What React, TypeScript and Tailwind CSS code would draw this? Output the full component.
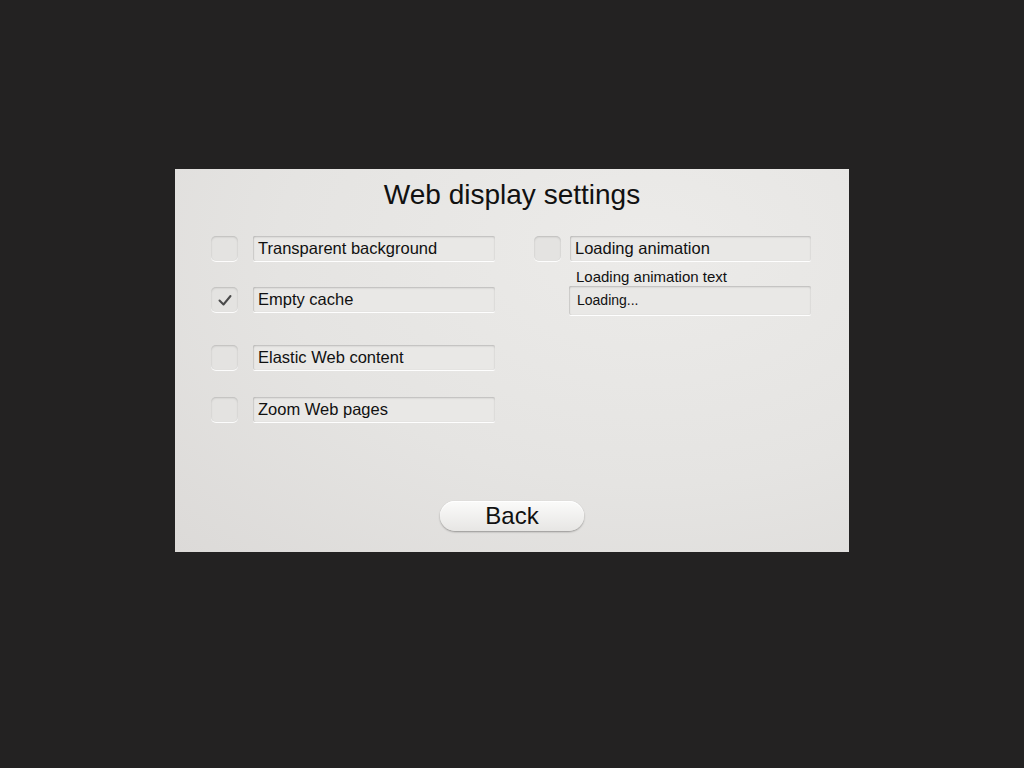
import React, { useState } from 'react';

const font = { fontFamily: '"Liberation Sans", Arial, sans-serif' };

function Check({ checked, onClick }: { checked: boolean; onClick: () => void }) {
  return (
    <button
      onClick={onClick}
      className="flex h-[25px] w-[27px] shrink-0 items-center justify-center rounded-[5px] bg-[#e4e3e1] shadow-[inset_0_1px_2px_rgba(0,0,0,0.18),0_1px_0_rgba(255,255,255,0.9)]"
    >
      {checked && (
        <svg width="16" height="14" viewBox="0 0 16 14" fill="none">
          <path d="M2.5 7.5 L6.5 11.5 L13.5 3" stroke="#4a4a4a" strokeWidth="2" strokeLinecap="round" strokeLinejoin="round" />
        </svg>
      )}
    </button>
  );
}

function Field({ children, className = '' }: { children: React.ReactNode; className?: string }) {
  return (
    <div
      className={`flex items-center rounded-[2px] bg-[#e9e8e6] px-[5px] text-[#111] shadow-[inset_0_1px_2px_rgba(0,0,0,0.2),inset_1px_0_1px_rgba(0,0,0,0.08),0_1px_0_rgba(255,255,255,0.95)] ${className}`}
    >
      {children}
    </div>
  );
}

export default function App() {
  const [opts, setOpts] = useState({
    transparent: false,
    cache: true,
    elastic: false,
    zoom: false,
    loading: false,
  });
  const toggle = (k: keyof typeof opts) => setOpts((p) => ({ ...p, [k]: !p[k] }));

  // 왼쪽 설정 목록
  const leftRows: { key: keyof typeof opts; label: string; mt: string }[] = [
    { key: 'transparent', label: 'Transparent background', mt: 'mt-0' },
    { key: 'cache', label: 'Empty cache', mt: 'mt-[26px]' },
    { key: 'elastic', label: 'Elastic Web content', mt: 'mt-[33px]' },
    { key: 'zoom', label: 'Zoom Web pages', mt: 'mt-[27px]' },
  ];

  return (
    <div className="min-h-[768px] w-full bg-[#232222] pt-[169px]" style={font}>
      <div className="mx-auto flex h-[383px] w-[674px] flex-col bg-[radial-gradient(ellipse_at_70%_20%,#ecebe9_0%,#e5e4e2_55%,#dcdad8_100%)]">
        {/* 타이틀 */}
        <h1 className="mt-[8px] text-center text-[28px] leading-[36px] text-[#111]">Web display settings</h1>

        <div className="mt-[23px] flex pl-[36px]">
          {/* 왼쪽 */}
          <div className="flex w-[323px] flex-col">
            {leftRows.map((r) => (
              <div key={r.key} className={`flex items-center gap-[15px] ${r.mt}`}>
                <Check checked={opts[r.key]} onClick={() => toggle(r.key)} />
                <Field className="h-[25px] w-[242px] text-[16.5px]">{r.label}</Field>
              </div>
            ))}
          </div>

          {/* 오른쪽 */}
          <div className="flex flex-col">
            <div className="flex items-center gap-[9px]">
              <Check checked={opts.loading} onClick={() => toggle('loading')} />
              <Field className="h-[25px] w-[241px] text-[16.5px]">Loading animation</Field>
            </div>
            <div className="ml-[42px] mt-[7px] text-[15px] leading-[18px] text-[#111]">Loading animation text</div>
            <Field className="ml-[35px] h-[29px] w-[242px] pl-[8px] text-[14px]">Loading...</Field>
          </div>
        </div>

        {/* 뒤로 버튼 */}
        <div className="mt-auto mb-[21px] flex justify-center">
          <button className="h-[30px] w-[144px] rounded-full bg-gradient-to-b from-[#fbfbfa] to-[#e7e6e4] text-[24px] leading-[30px] text-[#111] shadow-[0_1px_2px_rgba(0,0,0,0.35),inset_0_1px_0_rgba(255,255,255,1)]">
            Back
          </button>
        </div>
      </div>
    </div>
  );
}
